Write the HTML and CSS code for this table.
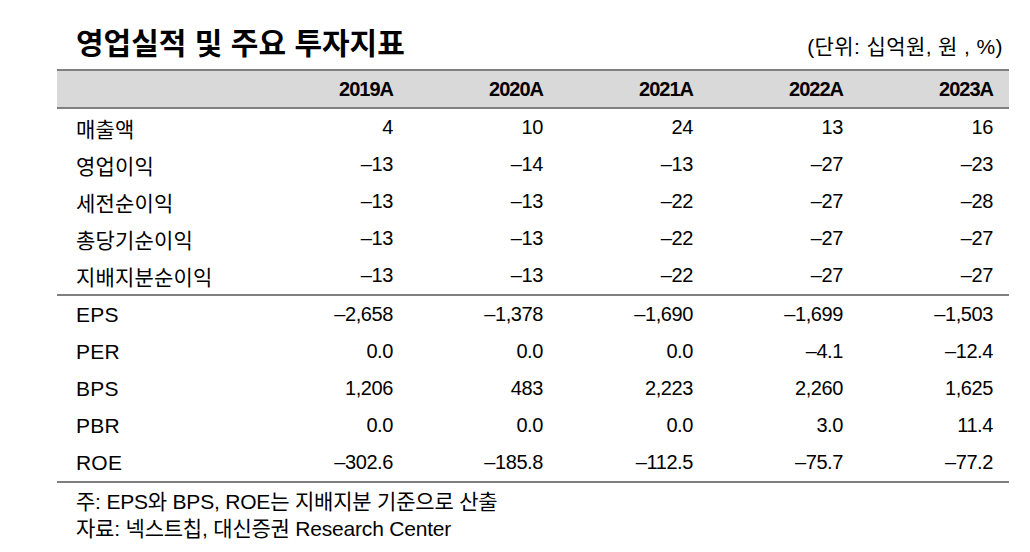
FILE: index.html
```html
<!DOCTYPE html>
<html lang="ko">
<head>
<meta charset="utf-8">
<link rel="stylesheet" href="styles.css">
</head>
<body>
<div class="wrap">
  <div class="titlebar">
    <div class="title">영업실적 및 주요 투자지표</div>
    <div class="unit">(단위: 십억원, 원 , %)</div>
  </div>
  <div class="table">
    <div class="row head">
      <div class="lbl"></div><div>2019A</div><div>2020A</div><div>2021A</div><div>2022A</div><div>2023A</div>
    </div>
    <div class="group">
      <div class="row"><div class="lbl">매출액</div><div>4</div><div>10</div><div>24</div><div>13</div><div>16</div></div>
      <div class="row"><div class="lbl">영업이익</div><div>–13</div><div>–14</div><div>–13</div><div>–27</div><div>–23</div></div>
      <div class="row"><div class="lbl">세전순이익</div><div>–13</div><div>–13</div><div>–22</div><div>–27</div><div>–28</div></div>
      <div class="row"><div class="lbl">총당기순이익</div><div>–13</div><div>–13</div><div>–22</div><div>–27</div><div>–27</div></div>
      <div class="row"><div class="lbl">지배지분순이익</div><div>–13</div><div>–13</div><div>–22</div><div>–27</div><div>–27</div></div>
    </div>
    <div class="group">
      <div class="row"><div class="lbl">EPS</div><div>–2,658</div><div>–1,378</div><div>–1,690</div><div>–1,699</div><div>–1,503</div></div>
      <div class="row"><div class="lbl">PER</div><div>0.0</div><div>0.0</div><div>0.0</div><div>–4.1</div><div>–12.4</div></div>
      <div class="row"><div class="lbl">BPS</div><div>1,206</div><div>483</div><div>2,223</div><div>2,260</div><div>1,625</div></div>
      <div class="row"><div class="lbl">PBR</div><div>0.0</div><div>0.0</div><div>0.0</div><div>3.0</div><div>11.4</div></div>
      <div class="row"><div class="lbl">ROE</div><div>–302.6</div><div>–185.8</div><div>–112.5</div><div>–75.7</div><div>–77.2</div></div>
    </div>
  </div>
  <div class="notes">
    <div>주: EPS와 BPS, ROE는 지배지분 기준으로 산출</div>
    <div>자료: 넥스트칩, 대신증권 Research Center</div>
  </div>
</div>
</body>
</html>
```
FILE: styles.css
```css
html, body {
  margin: 0;
  padding: 0;
  background: #ffffff;
}
body {
  font-family: "Liberation Sans", "Noto Sans CJK KR", sans-serif;
  color: #000;
}
.wrap {
  width: 952px;
  margin-left: 57px;
}
.titlebar {
  height: 69px;
  display: flex;
  justify-content: space-between;
  align-items: baseline;
  box-sizing: border-box;
  padding: 22px 6px 0 19px;
}
.title {
  font-family: "Noto Sans CJK KR", sans-serif;
  font-weight: bold;
  font-size: 30px;
  line-height: 38px;
  letter-spacing: 0;
}
.unit {
  font-size: 21px;
  line-height: 38px;
  letter-spacing: 0.4px;
}
.table {
  border-bottom: 2px solid #7f7f7f;
}
.row {
  display: grid;
  grid-template-columns: 167px repeat(5, 150px);
  padding: 0 16px 0 19px;
  height: 37px;
  align-items: center;
  font-size: 20px;
  letter-spacing: -0.4px;
}
.row > div {
  text-align: right;
}
.row > .lbl {
  text-align: left;
  font-family: "Liberation Sans", "Noto Sans CJK KR", sans-serif;
  font-size: 21px;
  letter-spacing: 0.2px;
  white-space: nowrap;
}
.row.head {
  background: #d9d9d9;
  border-top: 2px solid #7f7f7f;
  border-bottom: 2px solid #7f7f7f;
  height: 36px;
  font-weight: bold;
  letter-spacing: -1px;
}
.group + .group {
  border-top: 2px solid #7f7f7f;
}
.notes {
  padding: 5px 0 0 19px;
  font-size: 21px;
  line-height: 27px;
  letter-spacing: -0.2px;
}
```
